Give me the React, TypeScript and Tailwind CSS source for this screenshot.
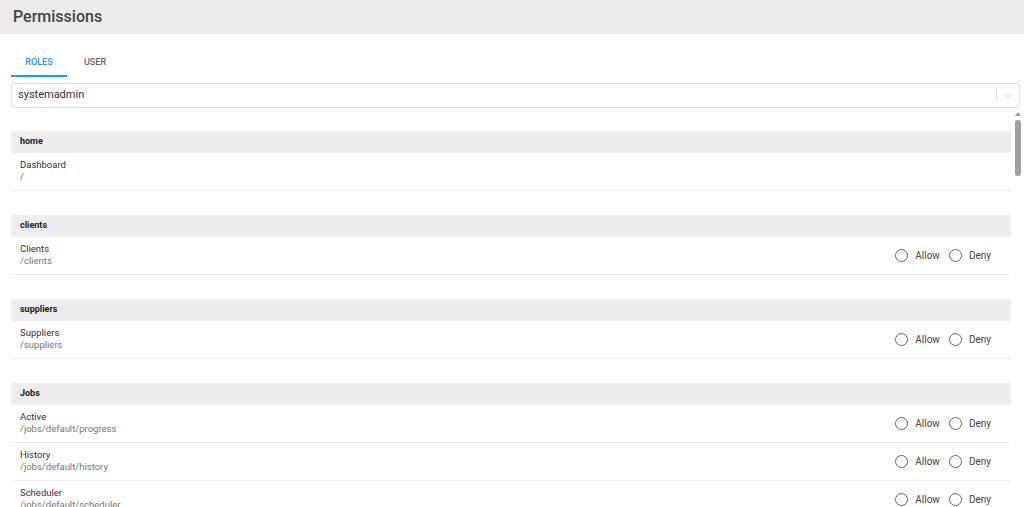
import React from 'react';
import { ChevronDown } from 'lucide-react';

type Route = { name: string; path: string; radio: boolean };
type Section = { title: string; routes: Route[] };

const sections: Section[] = [
  { title: 'home', routes: [{ name: 'Dashboard', path: '/', radio: false }] },
  { title: 'clients', routes: [{ name: 'Clients', path: '/clients', radio: true }] },
  { title: 'suppliers', routes: [{ name: 'Suppliers', path: '/suppliers', radio: true }] },
  {
    title: 'Jobs',
    routes: [
      { name: 'Active', path: '/jobs/default/progress', radio: true },
      { name: 'History', path: '/jobs/default/history', radio: true },
      { name: 'Scheduler', path: '/jobs/default/scheduler', radio: true },
    ],
  },
];

const Radio = ({ label }: { label: string }) => (
  <label className="flex items-center gap-[7px]">
    <span className="w-[13px] h-[13px] rounded-full border-[1.5px] border-[#666]" />
    <span className="text-[10px] text-[#444]">{label}</span>
  </label>
);

export default function App() {
  return (
    <div className="w-[1024px] h-[507px] overflow-hidden bg-white flex flex-col text-[#333]" style={{ fontFamily: 'Roboto, "Liberation Sans", sans-serif' }}>
      {/* page header */}
      <div className="h-[34px] bg-[#ebebeb] flex items-center px-[13px] shrink-0">
        <h1 className="text-[16px] font-medium text-[#444]">Permissions</h1>
      </div>

      {/* tabs */}
      <div className="flex px-[11px] mt-[19px] shrink-0">
        <div className="w-[56px] h-[24px] pt-[3px] flex items-start justify-center border-b-2 border-[#2196f3] text-[9px] font-medium text-[#2196f3]">ROLES</div>
        <div className="w-[56px] h-[24px] pt-[3px] flex items-start justify-center text-[9px] font-medium text-[#666]">USER</div>
      </div>

      {/* role select */}
      <div className="mx-[11px] mt-[6px] mr-[4px] h-[25px] border border-[#ddd] rounded-[3px] flex items-center shrink-0">
        <span className="flex-1 pl-[6px] text-[11px] text-[#333]">systemadmin</span>
        <span className="w-px h-[13px] bg-[#ddd]" />
        <span className="w-[22px] flex items-center justify-center text-[#bbb]">
          <ChevronDown size={12} strokeWidth={1.5} />
        </span>
      </div>

      {/* permissions list */}
      <div className="flex flex-1 min-h-0 mt-[2px]">
        <div className="flex-1 pl-[11px] pt-[21px] overflow-hidden">
          {sections.map((s, i) => (
            <div key={s.title} className={i > 0 ? 'mt-[24px]' : ''}>
              <div className="h-[22px] bg-[#ededed] flex items-center px-[9px] text-[9px] font-bold text-[#222]">{s.title}</div>
              {s.routes.map(r => (
                <div key={r.path} className="h-[38px] border-b border-[#eee] flex items-center pl-[9px] pr-[20px]">
                  <div className="flex-1 flex flex-col leading-[12px] -mt-[1px]">
                    <span className="text-[9.5px] text-[#333]">{r.name}</span>
                    <span className="text-[9.5px] text-[#777]">{r.path}</span>
                  </div>
                  {r.radio && (
                    <div className="flex items-center gap-[9px]">
                      <Radio label="Allow" />
                      <Radio label="Deny" />
                    </div>
                  )}
                </div>
              ))}
            </div>
          ))}
        </div>

        {/* scrollbar */}
        <div className="w-[13px] shrink-0 flex flex-col items-center pt-[2px]">
          <span className="w-0 h-0 border-l-[3px] border-r-[3px] border-b-[4px] border-l-transparent border-r-transparent border-b-[#999]" />
          <span className="mt-[4px] w-[6px] h-[56px] rounded-full bg-[#a0a0a0]" />
        </div>
      </div>
    </div>
  );
}
